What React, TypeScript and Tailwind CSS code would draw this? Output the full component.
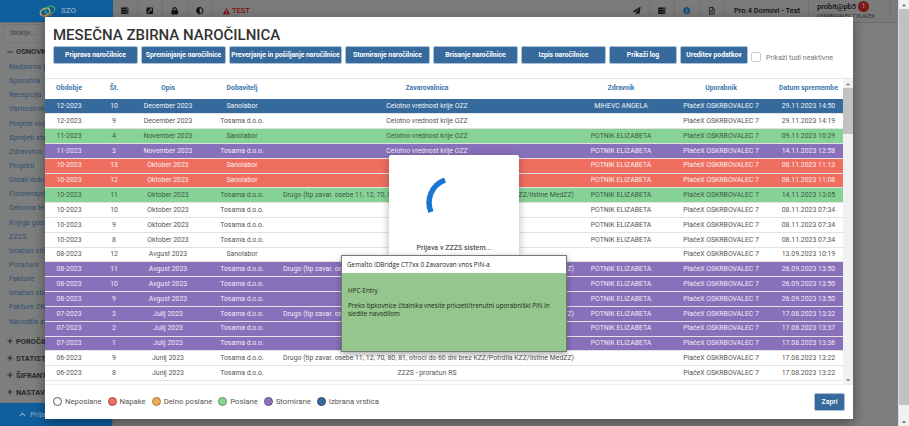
import React from 'react';
import { FaExternalLinkSquareAlt, FaLock, FaAdjust, FaExclamationTriangle, FaPaperPlane, FaInfoCircle, FaRegFileAlt, FaPlus, FaMinus, FaChevronUp, FaServer, FaCaretUp, FaCaretDown } from 'react-icons/fa';

const font = 'font-["Roboto",sans-serif]';

type Row = {
  period: string;
  num: string;
  desc: string;
  supplier: string;
  insurer: string;
  doctor: string;
  date: string;
  kind: 'selected' | 'white' | 'green' | 'purple' | 'red';
};

const CELOTNO = 'Celotno vrednost krije OZZ';
const DRUGO = 'Drugo (tip zavar. osebe 11, 12, 70, 80, 81, otroci do 60 dni brez KZZ/Potrdila KZZ/listine MedZZ)';
const POTNIK = 'POTNIK ELIZABETA';

const rows: Row[] = [
  { period: '12-2023', num: '10', desc: 'December 2023', supplier: 'Sanolabor', insurer: CELOTNO, doctor: 'MIHEVC ANGELA', date: '29.11.2023 14:50', kind: 'selected' },
  { period: '12-2023', num: '9', desc: 'December 2023', supplier: 'Tosama d.o.o.', insurer: CELOTNO, doctor: '', date: '29.11.2023 14:19', kind: 'white' },
  { period: '11-2023', num: '4', desc: 'November 2023', supplier: 'Sanolabor', insurer: CELOTNO, doctor: POTNIK, date: '09.11.2023 10:29', kind: 'green' },
  { period: '11-2023', num: '3', desc: 'November 2023', supplier: 'Tosama d.o.o.', insurer: CELOTNO, doctor: POTNIK, date: '14.11.2023 12:58', kind: 'purple' },
  { period: '10-2023', num: '13', desc: 'Oktober 2023', supplier: 'Sanolabor', insurer: '', doctor: POTNIK, date: '08.11.2023 11:13', kind: 'red' },
  { period: '10-2023', num: '12', desc: 'Oktober 2023', supplier: 'Sanolabor', insurer: '', doctor: POTNIK, date: '08.11.2023 11:08', kind: 'red' },
  { period: '10-2023', num: '11', desc: 'Oktober 2023', supplier: 'Tosama d.o.o.', insurer: DRUGO, doctor: POTNIK, date: '14.11.2023 13:05', kind: 'green' },
  { period: '10-2023', num: '10', desc: 'Oktober 2023', supplier: 'Tosama d.o.o.', insurer: '', doctor: POTNIK, date: '08.11.2023 07:34', kind: 'white' },
  { period: '10-2023', num: '9', desc: 'Oktober 2023', supplier: 'Tosama d.o.o.', insurer: '', doctor: POTNIK, date: '08.11.2023 07:34', kind: 'white' },
  { period: '10-2023', num: '8', desc: 'Oktober 2023', supplier: 'Tosama d.o.o.', insurer: '', doctor: POTNIK, date: '08.11.2023 07:34', kind: 'white' },
  { period: '08-2023', num: '12', desc: 'Avgust 2023', supplier: 'Sanolabor', insurer: '', doctor: '', date: '13.09.2023 10:19', kind: 'white' },
  { period: '08-2023', num: '11', desc: 'Avgust 2023', supplier: 'Tosama d.o.o.', insurer: DRUGO, doctor: POTNIK, date: '26.09.2023 13:50', kind: 'purple' },
  { period: '08-2023', num: '10', desc: 'Avgust 2023', supplier: 'Tosama d.o.o.', insurer: '', doctor: POTNIK, date: '26.09.2023 13:50', kind: 'purple' },
  { period: '08-2023', num: '9', desc: 'Avgust 2023', supplier: 'Tosama d.o.o.', insurer: '', doctor: POTNIK, date: '26.09.2023 13:50', kind: 'purple' },
  { period: '07-2023', num: '3', desc: 'Julij 2023', supplier: 'Tosama d.o.o.', insurer: DRUGO, doctor: POTNIK, date: '17.08.2023 13:32', kind: 'purple' },
  { period: '07-2023', num: '2', desc: 'Julij 2023', supplier: 'Tosama d.o.o.', insurer: '', doctor: POTNIK, date: '17.08.2023 13:37', kind: 'purple' },
  { period: '07-2023', num: '1', desc: 'Julij 2023', supplier: 'Tosama d.o.o.', insurer: '', doctor: POTNIK, date: '17.08.2023 13:36', kind: 'purple' },
  { period: '06-2023', num: '9', desc: 'Junij 2023', supplier: 'Tosama d.o.o.', insurer: DRUGO, doctor: '', date: '17.08.2023 13:22', kind: 'white' },
  { period: '06-2023', num: '8', desc: 'Junij 2023', supplier: 'Tosama d.o.o.', insurer: 'ZZZS - proračun RS', doctor: '', date: '17.08.2023 13:22', kind: 'white' },
];

const rowClass: Record<Row['kind'], string> = {
  selected: 'bg-[#366a9c] text-[#eef3f8]',
  white: 'bg-white text-[#555555]',
  green: 'bg-[#87d396] text-[#3a5a42]',
  purple: 'bg-[#8970ba] text-[#eeeaf6]',
  red: 'bg-[#ef6e60] text-[#fdeeec]',
};

const buttons = [
  { label: 'Priprava naročilnice', w: 'w-[85px]' },
  { label: 'Spreminjanje naročilnice', w: 'w-[85px]' },
  { label: 'Preverjanje in pošiljanje naročilnice', w: 'w-[113px]' },
  { label: 'Storniranje naročilnice', w: 'w-[85px]' },
  { label: 'Brisanje naročilnice', w: 'w-[85px]' },
  { label: 'Izpis naročilnice', w: 'w-[85px]' },
  { label: 'Prikaži log', w: 'w-[68px]' },
  { label: 'Ureditev podatkov', w: 'w-[68px]' },
];

const legend = [
  { label: 'Neposlane', color: 'bg-white border-[#555555]' },
  { label: 'Napake', color: 'bg-[#ef6e60] border-[#a94c44]' },
  { label: 'Delno poslane', color: 'bg-[#efad55] border-[#a87a3c]' },
  { label: 'Poslane', color: 'bg-[#87d396] border-[#5f9569]' },
  { label: 'Stornirane', color: 'bg-[#8970ba] border-[#604f83]' },
  { label: 'Izbrana vrstica', color: 'bg-[#366a9c] border-[#264a6e]' },
];

const menu = ['Nadzorna plošča', 'Sporočila', 'Recepcija', 'Varnostnik', 'Prejete vloge', 'Sprejeti sta', 'Zdravstvo', 'Projekti', 'Ostali doku', 'Fizioterapija', 'Delovna te', 'Knjiga gost', 'ZZZS', 'Izračun sto', 'Poračuni', 'Fakture', 'Izračun sto', 'Fakture ZN', 'Navodila za'];
const groups = ['POROČILA', 'STATISTIKA', 'ŠIFRANTI', 'NASTAVITVE'];

function TopCell({ children }: { children: React.ReactNode }) {
  return <div className="w-[25px] h-full flex items-center justify-center border-r border-[#e4e4e4] text-[#222222] text-[7.5px]">{children}</div>;
}

function Background() {
  return (
    <div className="h-full flex flex-col bg-[#fdfdfd]">
      <div className="h-[23px] shrink-0 flex bg-[#f6f6f6] border-b border-[#dddddd]">
        {/* the blue bars keep their colour above the dim layer */}
        <div className="relative z-10 w-[113px] shrink-0 bg-[#0f5f9f] flex items-center pl-[39px] gap-[2px] text-[#8fb0cc] text-[8px] font-medium">
          <svg width="18" height="12" viewBox="0 0 18 12" fill="none">
            <ellipse cx="6" cy="7" rx="5" ry="3.5" stroke="#cbb85a" strokeWidth="1.3" transform="rotate(-25 6 7)" />
            <ellipse cx="11" cy="5" rx="5" ry="3.5" stroke="#4aa55a" strokeWidth="1.3" transform="rotate(-25 11 5)" />
            <path d="M3 10 C 6 12, 11 11, 13 9" stroke="#c0504f" strokeWidth="1.2" />
          </svg>
          <span className="ml-[2px]">SZO</span>
        </div>
        <TopCell><FaServer /></TopCell>
        <TopCell><FaExternalLinkSquareAlt /></TopCell>
        <TopCell><FaLock /></TopCell>
        <TopCell><FaAdjust /></TopCell>
        <div className="flex items-center gap-[2px] pl-[10px] text-[#ff2a2a] text-[7.5px] font-medium"><FaExclamationTriangle className="text-[7px]" />TEST</div>
        <div className="flex-1" />
        <TopCell><FaPaperPlane /></TopCell>
        <TopCell><FaServer /></TopCell>
        <TopCell><span className="text-[#2fa8ff]"><FaInfoCircle /></span></TopCell>
        <TopCell><FaRegFileAlt /></TopCell>
        <div className="w-[84px] h-full flex items-center pl-[9px] border-r border-[#e4e4e4] text-[#222222] text-[7.5px] font-medium">Pro.4 Domovi - Test</div>
        <div className="w-[82px] h-full pl-[8px] pt-[1px] border-r border-[#e4e4e4] text-[#222222]">
          <div className="flex items-center gap-[2px] text-[7.5px] leading-[10px] font-medium">
            probit@pb5
            <span className="w-[11px] h-[11px] rounded-full bg-[#ff2a2a] text-white text-[7px] leading-[11px] text-center">1</span>
          </div>
          <div className="text-[5px] leading-[7px] mt-[1px] whitespace-nowrap text-[#555555]">OSKRBOVALEC 7 PLAČEK</div>
        </div>
        <div className="w-[18px] flex items-center pl-[9px]">
          <div className="w-[9px] h-[7px] flex flex-col shrink-0">
            <div className="flex-1 bg-white" /><div className="flex-1 bg-[#2a3fb0]" /><div className="flex-1 bg-[#e02020]" />
          </div>
        </div>
      </div>
      <div className="flex-1 flex min-h-0">
        <div className="w-[113px] shrink-0 flex flex-col bg-[#fbfcfd] border-r border-[#dddddd]">
          <div className="h-[19px] mx-[3px] mt-[1px] px-[6px] bg-white border border-[#e8e8e8] flex items-center text-[6.5px] text-[#888888]">Iskanje...</div>
          <div className="flex-1 min-h-0 overflow-hidden pt-[1px]">
            <div className="flex items-center gap-[3px] pl-[7px] h-[16px] text-[7.5px] font-bold text-[#555555]"><FaMinus className="text-[6px]" />OSNOVNI</div>
            {menu.map((m, i) => (
              <div key={i} className="pl-[9px] h-[14.15px] text-[7.5px] leading-[14px] text-[#6aa4dc] whitespace-nowrap">{m}</div>
            ))}
            <div className="h-[4px]" />
            {groups.map((g) => (
              <div key={g} className="flex items-center gap-[3px] pl-[7px] h-[17px] text-[7.5px] font-bold text-[#555555]"><FaPlus className="text-[6px]" />{g}</div>
            ))}
          </div>
          <div className="relative z-10 h-[23px] shrink-0 bg-[#0f5f9f] flex items-center pl-[19px] gap-[4px] text-[#8fb0cc] text-[8px]"><FaChevronUp className="text-[7px]" />Prijava</div>
        </div>
        <div className="flex-1" />
        <div className="w-[11px] shrink-0" />
      </div>
    </div>
  );
}

function DataTable() {
  return (
    <div className="flex h-[306px] border-t border-[#e6e6e6]">
      <div className="flex-1 overflow-hidden">
        <table className="w-[798px] table-fixed border-collapse text-[6.9px] text-center">
          <colgroup>
            <col className="w-[48px]" />
            <col className="w-[42px]" />
            <col className="w-[66px]" />
            <col className="w-[82px]" />
            <col className="w-[288px]" />
            <col className="w-[100px]" />
            <col className="w-[100px]" />
            <col className="w-[72px]" />
          </colgroup>
          <thead>
            <tr className="h-[20px] text-[#3b76ad] font-bold text-[6.9px]">
              <th className="pb-[2px]">Obdobje</th>
              <th className="pb-[2px]">Št.</th>
              <th className="pb-[2px]">Opis</th>
              <th className="pb-[2px]">Dobavitelj</th>
              <th className="pb-[2px]">Zavarovalnica</th>
              <th className="pb-[2px]">Zdravnik</th>
              <th className="pb-[2px]">Uporabnik</th>
              <th className="pb-[2px] pl-[3px] whitespace-nowrap">Datum spremembe</th>
            </tr>
          </thead>
          <tbody>
            {rows.map((r, i) => (
              <tr key={i} className={`h-[14.82px] border-b border-[#e2e2e2] ${rowClass[r.kind]}`}>
                <td>{r.period}</td>
                <td>{r.num}</td>
                <td>{r.desc}</td>
                <td>{r.supplier}</td>
                <td className="whitespace-nowrap">{r.insurer}</td>
                <td>{r.doctor}</td>
                <td className="whitespace-nowrap">PlačeX OSKRBOVALEC 7</td>
                <td className="pl-[3px] whitespace-nowrap">{r.date}</td>
              </tr>
            ))}
          </tbody>
        </table>
      </div>
      <div className="w-[10px] shrink-0 flex flex-col items-center bg-[#f1f1f1] text-[#777777] text-[6px]">
        <div className="h-[9px] flex items-center"><FaCaretUp /></div>
        <div className="w-full h-[46px] bg-[#c1c1c1]" />
        <div className="flex-1" />
        <div className="h-[9px] flex items-center"><FaCaretDown /></div>
      </div>
    </div>
  );
}

function Modal() {
  return (
    <div className="absolute z-20 left-[45px] top-[17px] w-[808px] h-[402px] bg-white shadow-[0_4px_12px_rgba(0,0,0,0.4)] flex flex-col">
      <h1 className="pl-[8px] pt-[9px] h-[29px] text-[15px] leading-[18px] font-medium text-[#333333]">MESEČNA ZBIRNA NAROČILNICA</h1>
      <div className="h-[32px] pl-[8px] flex items-start gap-[3px]">
        {buttons.map((b) => (
          <div key={b.label} className={`${b.w} h-[18px] rounded-[2px] bg-[#366a9c] border border-[#a9c0d6] text-white text-[6.8px] font-bold flex items-center justify-center whitespace-nowrap`}>{b.label}</div>
        ))}
        <div className="w-[10px] h-[10px] mt-[6px] rounded-[2px] border border-[#cccccc] bg-white" />
        <span className="mt-[6px] ml-[2px] text-[7.1px] leading-[12px] text-[#777777] whitespace-nowrap">Prikaži tudi neaktivne</span>
      </div>
      <DataTable />
      <div className="flex-1 border-t border-[#eeeeee] flex items-center justify-between pl-[8px] pr-[8px]">
        <div className="flex items-center gap-[6px] text-[7.7px] text-[#555555]">
          {legend.map((l) => (
            <div key={l.label} className="flex items-center gap-[3px]">
              <span className={`w-[9px] h-[9px] rounded-full border ${l.color}`} />
              {l.label}
            </div>
          ))}
        </div>
        <div className="w-[31px] h-[18px] rounded-[2px] bg-[#366a9c] border border-[#a9c0d6] text-white text-[7px] font-medium flex items-center justify-center">Zapri</div>
      </div>
    </div>
  );
}

function LoadingDialog() {
  return (
    <div className="absolute z-20 left-[389px] top-[155px] w-[130px] h-[102px] bg-white rounded-[2px] shadow-[0_2px_8px_rgba(0,0,0,0.3)] flex flex-col items-center">
      <svg width="60" height="60" viewBox="0 0 60 60" className="mt-[12px]">
        <path d="M 21 13 A 24 24 0 0 0 7 45" fill="none" stroke="#1976d2" strokeWidth="5.5" />
      </svg>
      <div className="mt-[16px] text-[7.1px] text-[#555555] font-medium whitespace-nowrap">Prijava v ZZZS sistem...</div>
    </div>
  );
}

function PinDialog() {
  return (
    <div className="absolute z-20 left-[341px] top-[255px] w-[226px] h-[97px] border border-[#777777] shadow-[0_2px_6px_rgba(0,0,0,0.35)] flex flex-col font-['Open_Sans',sans-serif]">
      <div className="h-[17px] bg-white flex items-center pl-[5px] text-[6.35px] text-[#222222] whitespace-nowrap">Gemalto IDBridge CT7xx 0 Zavarovan vnos PIN-a</div>
      <div className="flex-1 bg-[#95c68d] pl-[6px] pr-[6px] pt-[14px] text-[6.3px] leading-[8px] text-[#1a2a16]">
        <div>HPC-Entry</div>
        <div className="mt-[7px]">Preko tipkovnice čitalnika vnesite privzeti/trenutni uporabniški PIN in sledite navodilom</div>
      </div>
    </div>
  );
}

export default function App() {
  return (
    <div className={`relative w-[909px] h-[426px] overflow-hidden ${font}`}>
      <Background />
      <div className="absolute inset-0 bg-black/50" />
      <div className="absolute z-10 right-0 top-0 bottom-0 w-[11px] bg-[#f1f1f1] border-l border-[#dddddd] flex flex-col items-center text-[#666666] text-[6px]">
        <div className="h-[9px] flex items-center"><FaCaretUp /></div>
        <div className="w-full h-[396px] bg-[#c1c1c1]" />
        <div className="flex-1" />
        <div className="h-[9px] flex items-center"><FaCaretDown /></div>
      </div>
      <Modal />
      <LoadingDialog />
      <PinDialog />
    </div>
  );
}
